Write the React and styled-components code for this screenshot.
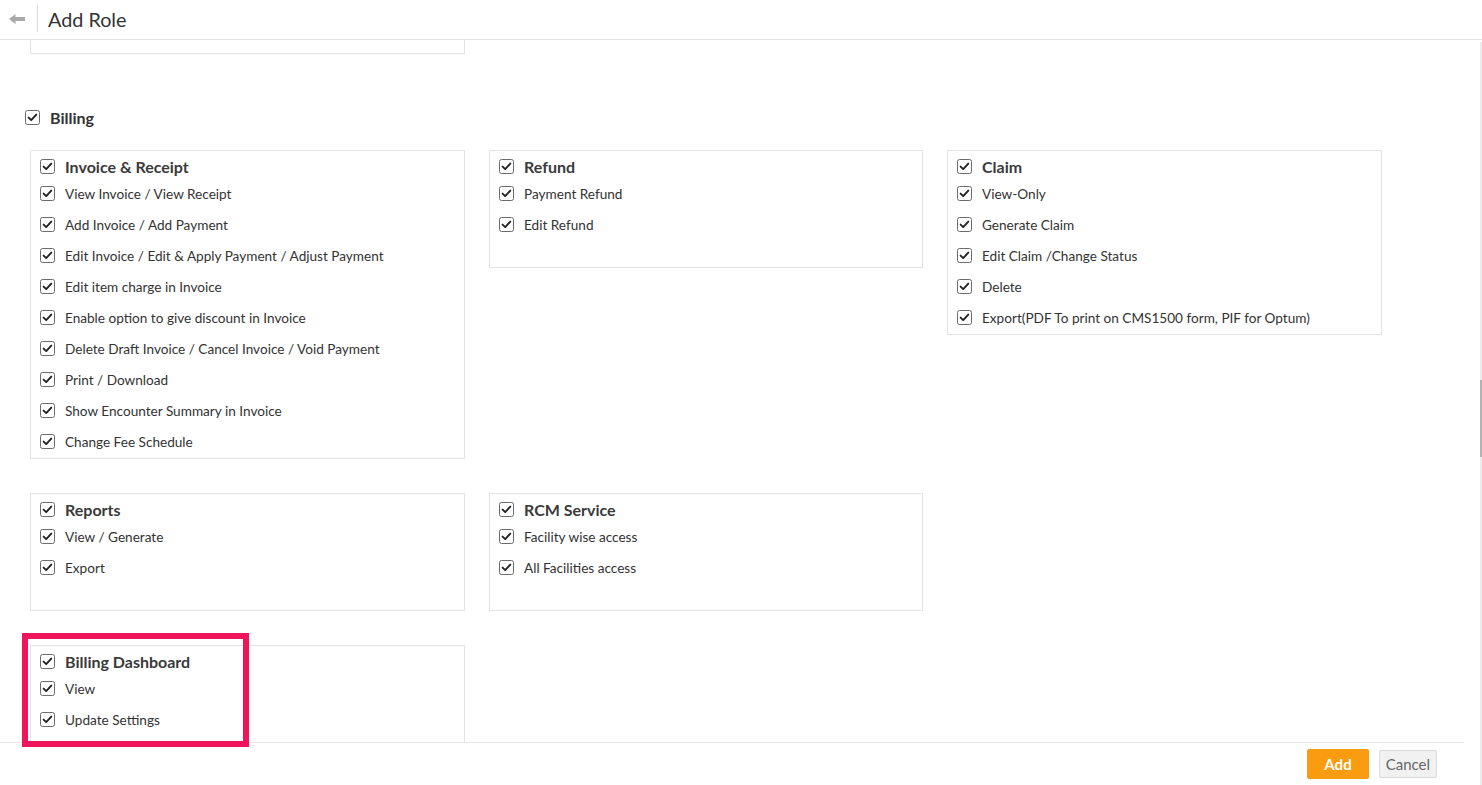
import React from "react";
import styled, { createGlobalStyle } from "styled-components";

const Global = createGlobalStyle`
  html, body { margin: 0; padding: 0; background: #fff; }
  body { font-family: Lato, "Open Sans", "Liberation Sans", sans-serif; color: #333; overflow: hidden; }
  * { box-sizing: border-box; }
`;

const Page = styled.div`
  position: relative;
  width: 1482px;
  height: 785px;
  display: flex;
  flex-direction: column;
  background: #fff;
  overflow: hidden;
`;

const Header = styled.header`
  height: 40px;
  flex: none;
  display: flex;
  align-items: center;
  border-bottom: 1px solid #e3e3e3;
`;

const BackButton = styled.button`
  width: 37px;
  height: 40px;
  border: none;
  background: none;
  padding: 0 0 2px 9px;
  display: flex;
  align-items: center;
  cursor: pointer;
`;

const Divider = styled.span`
  width: 1px;
  height: 27px;
  background: #dcdcdc;
  margin-top: -3px;
`;

const Title = styled.h1`
  margin: 0 0 2px 10px;
  font-size: 19.8px;
  font-weight: 400;
  color: #333;
`;

const Content = styled.main`
  flex: 1;
  overflow: hidden;
  padding-left: 25px;
`;

const ClippedCard = styled.div`
  width: 435px;
  height: 14px;
  margin-left: 5px;
  border: 1px solid #e3e3e3;
  border-top: none;
`;

const SectionHeader = styled.label`
  display: flex;
  align-items: center;
  gap: 10px;
  height: 20px;
  margin-top: 53px;
  font-size: 16px;
  font-weight: 700;
  color: #333;
`;

const Grid = styled.div`
  display: grid;
  grid-template-columns: 435px 434px 435px;
  column-gap: 24px;
  row-gap: 34px;
  align-items: start;
  margin: 23px 0 0 5px;
`;

const Card = styled.section`
  grid-column: ${(p) => (p.$newRow ? "1" : "auto")};
  border: 1px solid #e3e3e3;
  padding: 3px 9px 1px;
  min-height: 118px;
`;

const Row = styled.label`
  display: flex;
  align-items: center;
  gap: 10px;
  height: ${(p) => (p.$title ? "24px" : "31px")};
  font-size: ${(p) => (p.$title ? "16px" : "13.6px")};
  font-weight: ${(p) => (p.$title ? 700 : 400)};
  color: ${(p) => (p.$title ? "#3a3a3a" : "#333")};
  white-space: nowrap;
`;

const Footer = styled.footer`
  flex: none;
  height: 43px;
  width: 1464px;
  border-top: 1px solid #e6e6e6;
  display: flex;
  justify-content: flex-end;
  align-items: center;
  gap: 10px;
  padding: 0 27px 0 0;
  background: #fff;
`;

const Button = styled.button`
  height: ${(p) => (p.$primary ? "30px" : "28px")};
  padding: 0 ${(p) => (p.$primary ? "16px" : "6px")};
  border-radius: 2px;
  font-family: Lato, "Liberation Sans", sans-serif;
  font-size: 15px;
  border: 1px solid ${(p) => (p.$primary ? "#f89c0e" : "#dadada")};
  background: ${(p) => (p.$primary ? "#fa9c0f" : "#f1f1f1")};
  color: ${(p) => (p.$primary ? "#fff" : "#666")};
  font-weight: ${(p) => (p.$primary ? 700 : 400)};
  cursor: pointer;
`;

const Highlight = styled.div`
  position: absolute;
  left: 22px;
  top: 633px;
  width: 227px;
  height: 114px;
  border: 6px solid #f0145a;
  pointer-events: none;
`;

const ScrollTrack = styled.div`
  position: absolute;
  right: 0;
  top: 42px;
  bottom: 0;
  width: 2px;
  background: #ececec;
`;

const ScrollThumb = styled.div`
  position: absolute;
  left: 0;
  top: 338px;
  width: 2px;
  height: 77px;
  background: #b3b3b3;
`;

const Check = () => (
  <svg width="15" height="15" viewBox="0 0 15 15" style={{ flex: "none" }}>
    <rect x="0.5" y="0.5" width="14" height="14" rx="2" fill="#fff" stroke="#6b6b6b" />
    <path d="M3.6 7.6 L6.2 10.1 L11.3 4.6" fill="none" stroke="#222" strokeWidth="1.9" strokeLinecap="round" strokeLinejoin="round" />
  </svg>
);

const BackArrow = () => (
  <svg width="17" height="10" viewBox="0 0 17 10">
    <path d="M0 5 L6.5 0 L6.5 3 L16 3 L16 7 L6.5 7 L6.5 10 Z" fill="#a8a8a8" />
  </svg>
);

const sections = [
  {
    title: "Invoice & Receipt",
    items: [
      "View Invoice / View Receipt",
      "Add Invoice / Add Payment",
      "Edit Invoice / Edit & Apply Payment / Adjust Payment",
      "Edit item charge in Invoice",
      "Enable option to give discount in Invoice",
      "Delete Draft Invoice / Cancel Invoice / Void Payment",
      "Print / Download",
      "Show Encounter Summary in Invoice",
      "Change Fee Schedule",
    ],
  },
  { title: "Refund", items: ["Payment Refund", "Edit Refund"] },
  {
    title: "Claim",
    items: [
      "View-Only",
      "Generate Claim",
      "Edit Claim /Change Status",
      "Delete",
      "Export(PDF To print on CMS1500 form, PIF for Optum)",
    ],
  },
  { title: "Reports", items: ["View / Generate", "Export"], newRow: true },
  { title: "RCM Service", items: ["Facility wise access", "All Facilities access"] },
  { title: "Billing Dashboard", items: ["View", "Update Settings"], newRow: true },
];

export default function App() {
  return (
    <>
      <Global />
      <Page>
        <Header>
          <BackButton aria-label="Back">
            <BackArrow />
          </BackButton>
          <Divider />
          <Title>Add Role</Title>
        </Header>
        <Content>
          <ClippedCard />
          <SectionHeader>
            <Check />
            Billing
          </SectionHeader>
          <Grid>
            {sections.map((s) => (
              <Card key={s.title} $newRow={s.newRow}>
                <Row $title>
                  <Check />
                  {s.title}
                </Row>
                {s.items.map((it) => (
                  <Row key={it}>
                    <Check />
                    {it}
                  </Row>
                ))}
              </Card>
            ))}
          </Grid>
        </Content>
        <Footer>
          <Button $primary>Add</Button>
          <Button>Cancel</Button>
        </Footer>
        <Highlight />
        <ScrollTrack>
          <ScrollThumb />
        </ScrollTrack>
      </Page>
    </>
  );
}
